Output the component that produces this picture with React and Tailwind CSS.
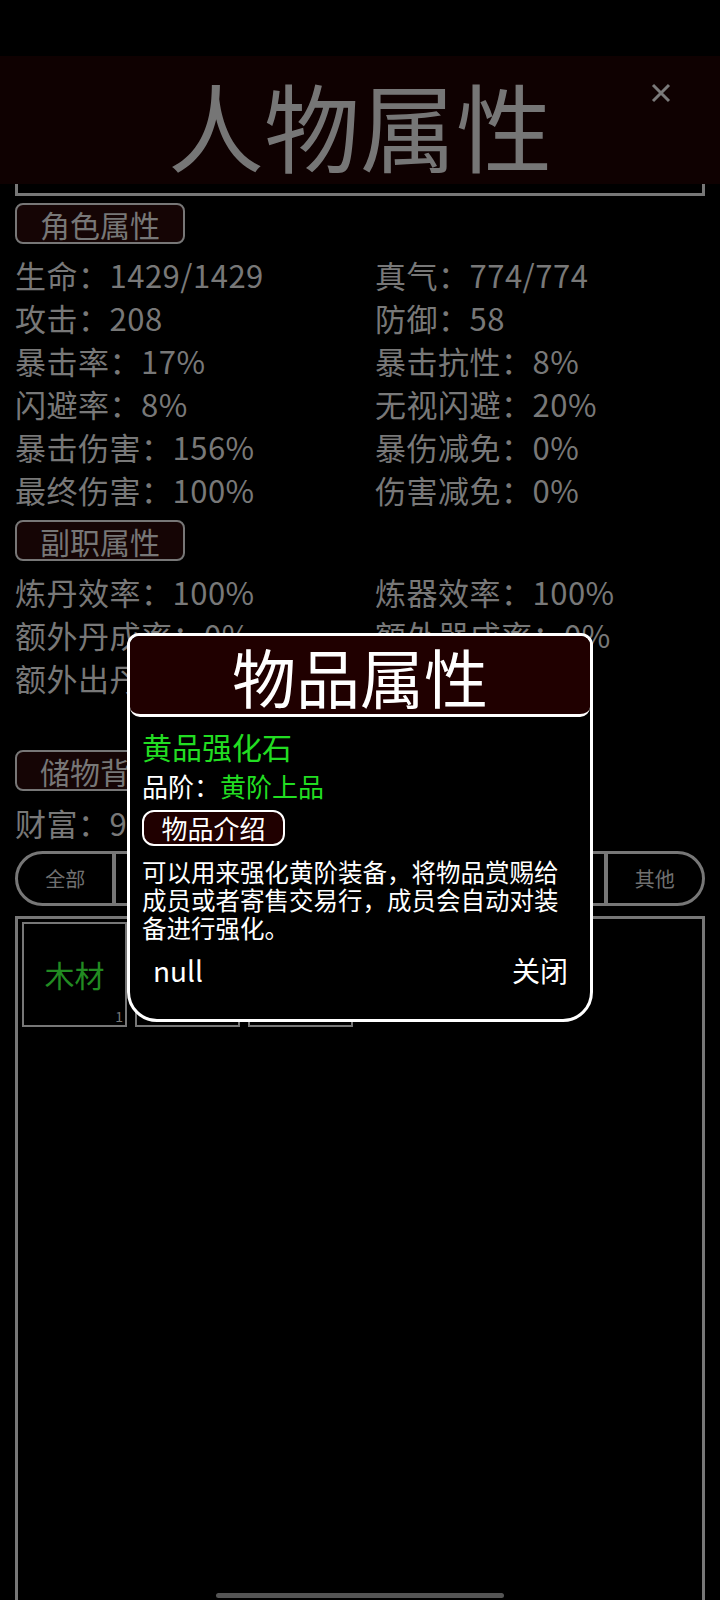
import React from 'react';

const baseStats = [
  ['生命：1429/1429', '真气：774/774'],
  ['攻击：208', '防御：58'],
  ['暴击率：17%', '暴击抗性：8%'],
  ['闪避率：8%', '无视闪避：20%'],
  ['暴击伤害：156%', '暴伤减免：0%'],
  ['最终伤害：100%', '伤害减免：0%'],
];

const subStats = [
  ['炼丹效率：100%', '炼器效率：100%'],
  ['额外丹成率：0%', '额外器成率：0%'],
  ['额外出丹率：0%', ''],
];

const tabs = ['全部', '装备', '丹药', '材料', '功法', '杂物', '其他'];

const items = [
  { id: 1, name: '木材', count: 1 },
  { id: 2, name: '铁矿', count: null },
  { id: 3, name: '灵草', count: null },
];

const Badge = ({ children, className = '' }) => (
  <div
    className={`w-[170px] h-[41px] rounded-[8px] border-2 border-[#777] bg-[#150505] text-[30px] leading-none text-[#777] flex items-center justify-center ${className}`}
  >
    {children}
  </div>
);

const StatRows = ({ rows }) => (
  <div className="px-[15px]">
    {rows.map((r, i) => (
      <div key={i} className="flex h-[43px] items-center text-[31px] tracking-[0.5px] text-[#787878] whitespace-nowrap">
        <span className="w-[360px]">{r[0]}</span>
        <span>{r[1]}</span>
      </div>
    ))}
  </div>
);

export default function App() {
  return (
    <div className="relative h-[1600px] w-[720px] overflow-hidden bg-black font-['Noto_Sans_CJK_SC','Noto_Sans',sans-serif] flex flex-col">
      {/* status bar space */}
      <div className="h-[56px] shrink-0" />

      {/* header */}
      <div className="relative h-[128px] shrink-0 bg-[#0f0101] flex items-center justify-center">
        <div className="text-[96px] leading-none text-[#767676] mt-[8px]">人物属性</div>
        <button className="absolute right-[49px] top-[27px] w-[20px] h-[20px]">
          <svg viewBox="0 0 20 20" className="w-[20px] h-[20px]">
            <path d="M2 2 L18 18 M18 2 L2 18" stroke="#7a7a7a" strokeWidth="3" />
          </svg>
        </button>
      </div>
      <div className="mx-[15px] h-[12px] shrink-0 border-x-[3px] border-b-[3px] border-[#777]" />

      {/* 角色属性 */}
      <Badge className="ml-[15px] mt-[7px] shrink-0">角色属性</Badge>
      <div className="mt-[10px] shrink-0">
        <StatRows rows={baseStats} />
      </div>

      {/* 副职属性 */}
      <Badge className="ml-[15px] mt-[8px] shrink-0">副职属性</Badge>
      <div className="mt-[10px] shrink-0">
        <StatRows rows={subStats} />
      </div>

      {/* 储物背包 */}
      <Badge className="ml-[15px] mt-[50px] shrink-0">储物背包</Badge>
      <div className="mt-[11px] h-[43px] px-[15px] flex items-center text-[31px] tracking-[0.5px] text-[#787878] shrink-0">财富：9527</div>

      {/* tabs */}
      <div className="mx-[15px] mt-[6px] h-[55px] shrink-0 rounded-full border-[3px] border-[#777] flex overflow-hidden">
        {tabs.map((t, i) => (
          <div
            key={t}
            className={`flex-1 flex items-center justify-center text-[20px] text-[#707070] ${i > 0 ? 'border-l-[4px] border-[#777]' : ''}`}
          >
            {t}
          </div>
        ))}
      </div>

      {/* grid */}
      <div className="mx-[15px] mt-[10px] flex-1 border-x-[3px] border-t-[3px] border-[#777] px-[4px] pt-[3px]">
        <div className="flex gap-[8px]">
          {items.map(it => (
            <div key={it.id} className="relative w-[105px] h-[105px] border-2 border-[#777] flex items-center justify-center">
              <span className="text-[30px] text-[#228b22]">{it.name}</span>
              {it.count && (
                <span className="absolute right-[2px] bottom-[-2px] text-[14px] text-[#777]">{it.count}</span>
              )}
            </div>
          ))}
        </div>
      </div>

      {/* item modal */}
      <div className="absolute left-[127px] top-[633px] w-[466px] h-[389px] rounded-t-[12px] rounded-b-[30px] border-[3px] border-white bg-black">
        <div className="h-[81px] rounded-t-[9px] rounded-b-[10px] border-b-[3px] border-white bg-[#200000] flex items-center justify-center">
          <span className="text-[64px] leading-none text-white">物品属性</span>
        </div>
        <div className="px-[12px]">
          <div className="mt-[11px] leading-[36px] text-[30px] text-[#22dd22]">黄品强化石</div>
          <div className="mt-[5px] leading-[34px] text-[26px] text-white">
            品阶：<span className="text-[#22dd22]">黄阶上品</span>
          </div>
          <div className="mt-[7px] w-[143px] h-[36px] rounded-[12px] border-2 border-white bg-[#200000] flex items-center justify-center text-[26px] leading-none text-white">
            物品介绍
          </div>
          <div className="mt-[12px] w-[420px] text-[24.5px] leading-[28px] text-white">
            可以用来强化黄阶装备，将物品赏赐给成员或者寄售交易行，成员会自动对装备进行强化。
          </div>
          <div className="mt-[11px] h-[34px] flex items-center justify-between pl-[11px] pr-[10px] text-[28px] text-white">
            <span>null</span>
            <span>关闭</span>
          </div>
        </div>
      </div>

      {/* home indicator */}
      <div className="absolute bottom-[2px] left-[216px] w-[288px] h-[5px] rounded-full bg-[#555]" />
    </div>
  );
}
